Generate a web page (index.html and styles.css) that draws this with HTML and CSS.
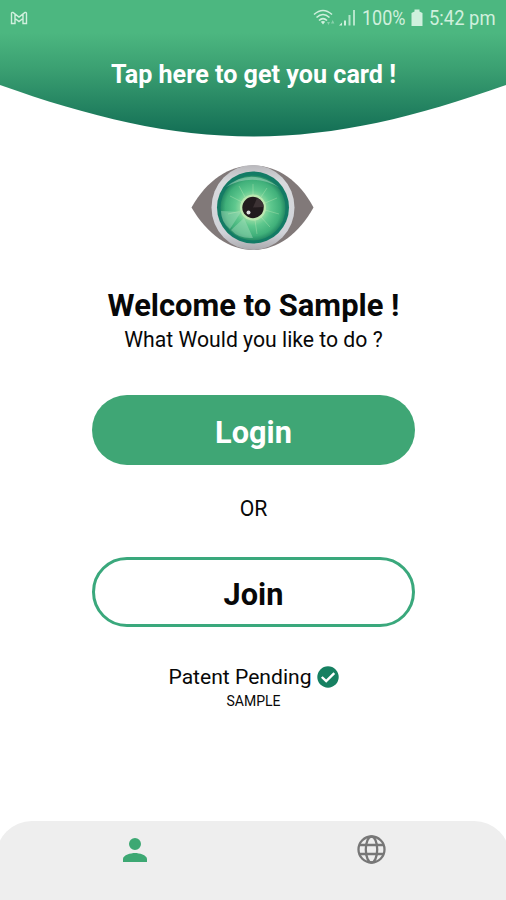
FILE: index.html
```html
<!DOCTYPE html>
<html lang="en">
<head>
<meta charset="utf-8">
<meta name="viewport" content="width=device-width, initial-scale=1">
<title>Welcome</title>
<link rel="stylesheet" href="styles.css">
</head>
<body>
<div class="app">
  <header class="header">
    <svg class="header-shape" viewBox="0 0 506 138" aria-hidden="true">
      <defs>
        <linearGradient id="headerFill" x1="0" y1="0" x2="0" y2="1">
          <stop offset="0" stop-color="#4cb780"/>
          <stop offset=".24" stop-color="#4cb780"/>
          <stop offset=".5" stop-color="#3ba072"/>
          <stop offset="1" stop-color="#126d54"/>
        </linearGradient>
      </defs>
      <path fill="url(#headerFill)" d="M0 0H506V85C416 117 336 136.500 253 136.500S90 117 0 85Z"/>
    </svg>
    <div class="status">
      <svg class="mail" viewBox="0 0 18 14"><path d="M1.500 2.500Q1.500 1 3 1.500L9 6L15 1.500Q16.500 1 16.500 2.500V12.500H13V7.500L9 10.500L5 7.500V12.500H1.500ZM5 3.500V7.500M13 3.500V7.500" fill="none" stroke="currentColor" stroke-width="1.400"/></svg>
      <svg class="wifi" viewBox="0 0 23 18"><g fill="none" stroke="currentColor" stroke-width="1.600"><path d="M1 5.500Q10 -2.500 19 5.500M3.500 8.500Q10 2.500 16.500 8.500M6 11.500Q10 7.700 14 11.500"/></g><path d="M7.800 12.800Q10 11 12.200 12.800L10 15.500Z" fill="currentColor"/><path d="M14 13H17L15.500 16ZM18 14.500L19.700 11L21.400 14.500Z" fill="currentColor" opacity=".45"/></svg>
      <svg class="signal" viewBox="0 0 18 18"><path d="M1 16.500L4 13.500V16.500ZM6 11.500H8V16.500H6Z" fill="currentColor"/><path d="M10.500 6H12.500V16.500H10.500ZM15 1H17V16.500H15Z" fill="currentColor" opacity=".8"/></svg>
      <span class="percent"><span>100%</span></span>
      <svg class="battery" viewBox="0 0 12 18"><path d="M3.500 .5H8.500V2.500L11.500 4V17H.5V4L3.500 2.500Z" fill="currentColor"/></svg>
      <span class="clock"><span>5:42 pm</span></span>
    </div>
    <div class="banner">Tap here to get you card !</div>
  </header>
  <main class="main">
    <svg class="eye" viewBox="0 0 124 88" role="img" aria-label="Eye">
      <defs>
        <radialGradient id="iris"><stop offset="0" stop-color="#d5f2b4"/><stop offset=".36" stop-color="#92dba2"/><stop offset=".55" stop-color="#5fc88e"/><stop offset=".85" stop-color="#40b07a"/><stop offset="1" stop-color="#248964"/></radialGradient>
        <linearGradient id="sclera" x1="0" y1="0" x2="0" y2="1"><stop offset="0" stop-color="#b9b8bc"/><stop offset=".2" stop-color="#d8dadd"/><stop offset=".8" stop-color="#d0d2d8"/><stop offset="1" stop-color="#aaa9ad"/></linearGradient>
      </defs>
      <path fill="#817979" d="M.5 43.500C16 16 38 1.500 62 1.500S108 16 122.500 43.500C108 70 86 86 62 86S16 70 .5 43.500Z"/>
      <ellipse cx="62" cy="43.500" rx="41.500" ry="42.500" fill="url(#sclera)"/>
      <circle cx="62" cy="43.500" r="36" fill="#137b65"/>
      <circle cx="62" cy="44" r="32.500" fill="url(#iris)"/>
      <path d="M35 23Q60 2 89 24Q62 8 35 23Z" fill="#b3dfc9" opacity=".5"/>
      <path d="M30 47L50 48L39 65Q30 58 30 47ZM40 66L53 54L62 74Q48 75 40 66Z" fill="#b5e2c6" opacity=".4"/>
      <g stroke="#d6f3c2" stroke-width="1" opacity=".3"><path d="M62 31V20M54 33L48 22M70 33L76 24M74 39L86 34M74 46L88 50M70 53L79 63M64 56L66 70M51 38L39 32M50 47L37 50"/></g>
      <circle cx="62" cy="43.500" r="13" fill="#dff4bd" opacity=".55"/>
      <circle cx="62" cy="43.500" r="10.700" fill="#221b1d"/>
      <path d="M62 43.500L66 34Q73 37 72.500 43Z" fill="#3c3234"/>
      <circle cx="57.500" cy="48.500" r="2" fill="#ddd"/>
    </svg>
    <h1 class="title">Welcome to Sample !</h1>
    <p class="subtitle">What Would you like to do ?</p>
    <button class="button login">Login</button>
    <div class="or">OR</div>
    <button class="button join">Join</button>
    <div class="patent"><span>Patent Pending</span>
      <svg class="check" viewBox="0 0 22 22"><circle cx="11" cy="11" r="10.700" fill="#168061"/><path d="M4.800 11L9.200 15.200L17.300 7.200" fill="none" stroke="#fff" stroke-width="2.400"/></svg>
    </div>
    <div class="sample">SAMPLE</div>
  </main>
  <nav class="tabs">
    <svg class="tab person" viewBox="4 4 16 16"><path d="M12 12a4 4 0 1 0 0-8 4 4 0 0 0 0 8Zm0 2c-2.670 0-8 1.340-8 4v2h16v-2c0-2.660-5.330-4-8-4Z" fill="currentColor"/></svg>
    <svg class="tab globe" viewBox="0 0 29 29"><g fill="none" stroke="currentColor" stroke-width="2.300"><circle cx="14.500" cy="14.500" r="13"/><ellipse cx="14.500" cy="14.500" rx="5.700" ry="13"/><path d="M2.500 10H26.500M2.500 19H26.500"/></g></svg>
  </nav>
</div>
</body>
</html>
```
FILE: styles.css
```css
* { box-sizing: border-box; }
body { margin: 0; background: #fff; color: #080808; font-family: Roboto, "Liberation Sans", sans-serif; }
.app { width: 506px; height: 900px; display: flex; flex-direction: column; overflow: hidden; }
.header { position: relative; height: 138px; flex: none; color: #fff; }
.header-shape { position: absolute; inset: 0; width: 506px; height: 138px; }
.status { position: relative; display: flex; align-items: center; height: 36px; padding: 0 11px 0 9.500px; color: #d0f0dd; font-size: 20px; line-height: 24px; }
.mail { width: 18px; height: 14px; margin-right: auto; }
.wifi { width: 23px; height: 18px; margin-right: 2px; }
.signal { width: 18px; height: 18px; margin-right: 6px; }
.percent { width: 44px; white-space: nowrap; }
.percent span, .clock span { display: inline-block; transform-origin: left; }
.percent span { transform: scaleX(.9); }
.battery { width: 12px; height: 18px; margin: 0 6px 0 5px; }
.clock { width: 66px; white-space: nowrap; }
.clock span { transform: scaleX(.92); }
.banner { position: relative; margin-top: 23px; padding-left: 1px; text-align: center; font-size: 25.150px; line-height: 32px; font-weight: 700; }
.main { display: flex; flex-direction: column; align-items: center; flex: 1; padding-left: 1px; }
.eye { width: 124px; height: 88px; margin: 26px 1px 0 0; flex: none; }
.title { margin: 34px 0 0; font-size: 30.900px; line-height: 40px; font-weight: 700; }
.subtitle { margin: 1px 0 0; font-size: 21.200px; line-height: 26px; }
.button { width: 323px; height: 70px; flex: none; margin: 42px 0 0; padding: 5px 0 0; border: 0; border-radius: 35px; font: 700 30.700px/36px Roboto, sans-serif; }
.login { color: #fff; background: #3fa675; }
.or { margin-top: 31px; font-size: 21.200px; line-height: 26px; }
.join { margin-top: 35px; border: 3px solid #3aa87c; background: #fff; color: #080808; }
.patent { display: flex; align-items: center; gap: 5px; margin-top: 37px; font-size: 21.100px; line-height: 26px; }
.patent span { line-height: 26px; }
.check { width: 22px; height: 22px; }
.sample { margin-top: 2px; font-size: 14px; line-height: 18px; }
.tabs { height: 79px; flex: none; margin: 0 -4px; background: #eee; border-radius: 36px 36px 0 0; display: grid; grid-template-columns: 1fr 1fr; justify-items: center; padding: 0 20px; }
.tab { display: block; }
.person { width: 24px; height: 24px; margin-top: 17px; color: #3da873; }
.globe { width: 29px; height: 29px; margin-top: 14px; color: #777; }
```
